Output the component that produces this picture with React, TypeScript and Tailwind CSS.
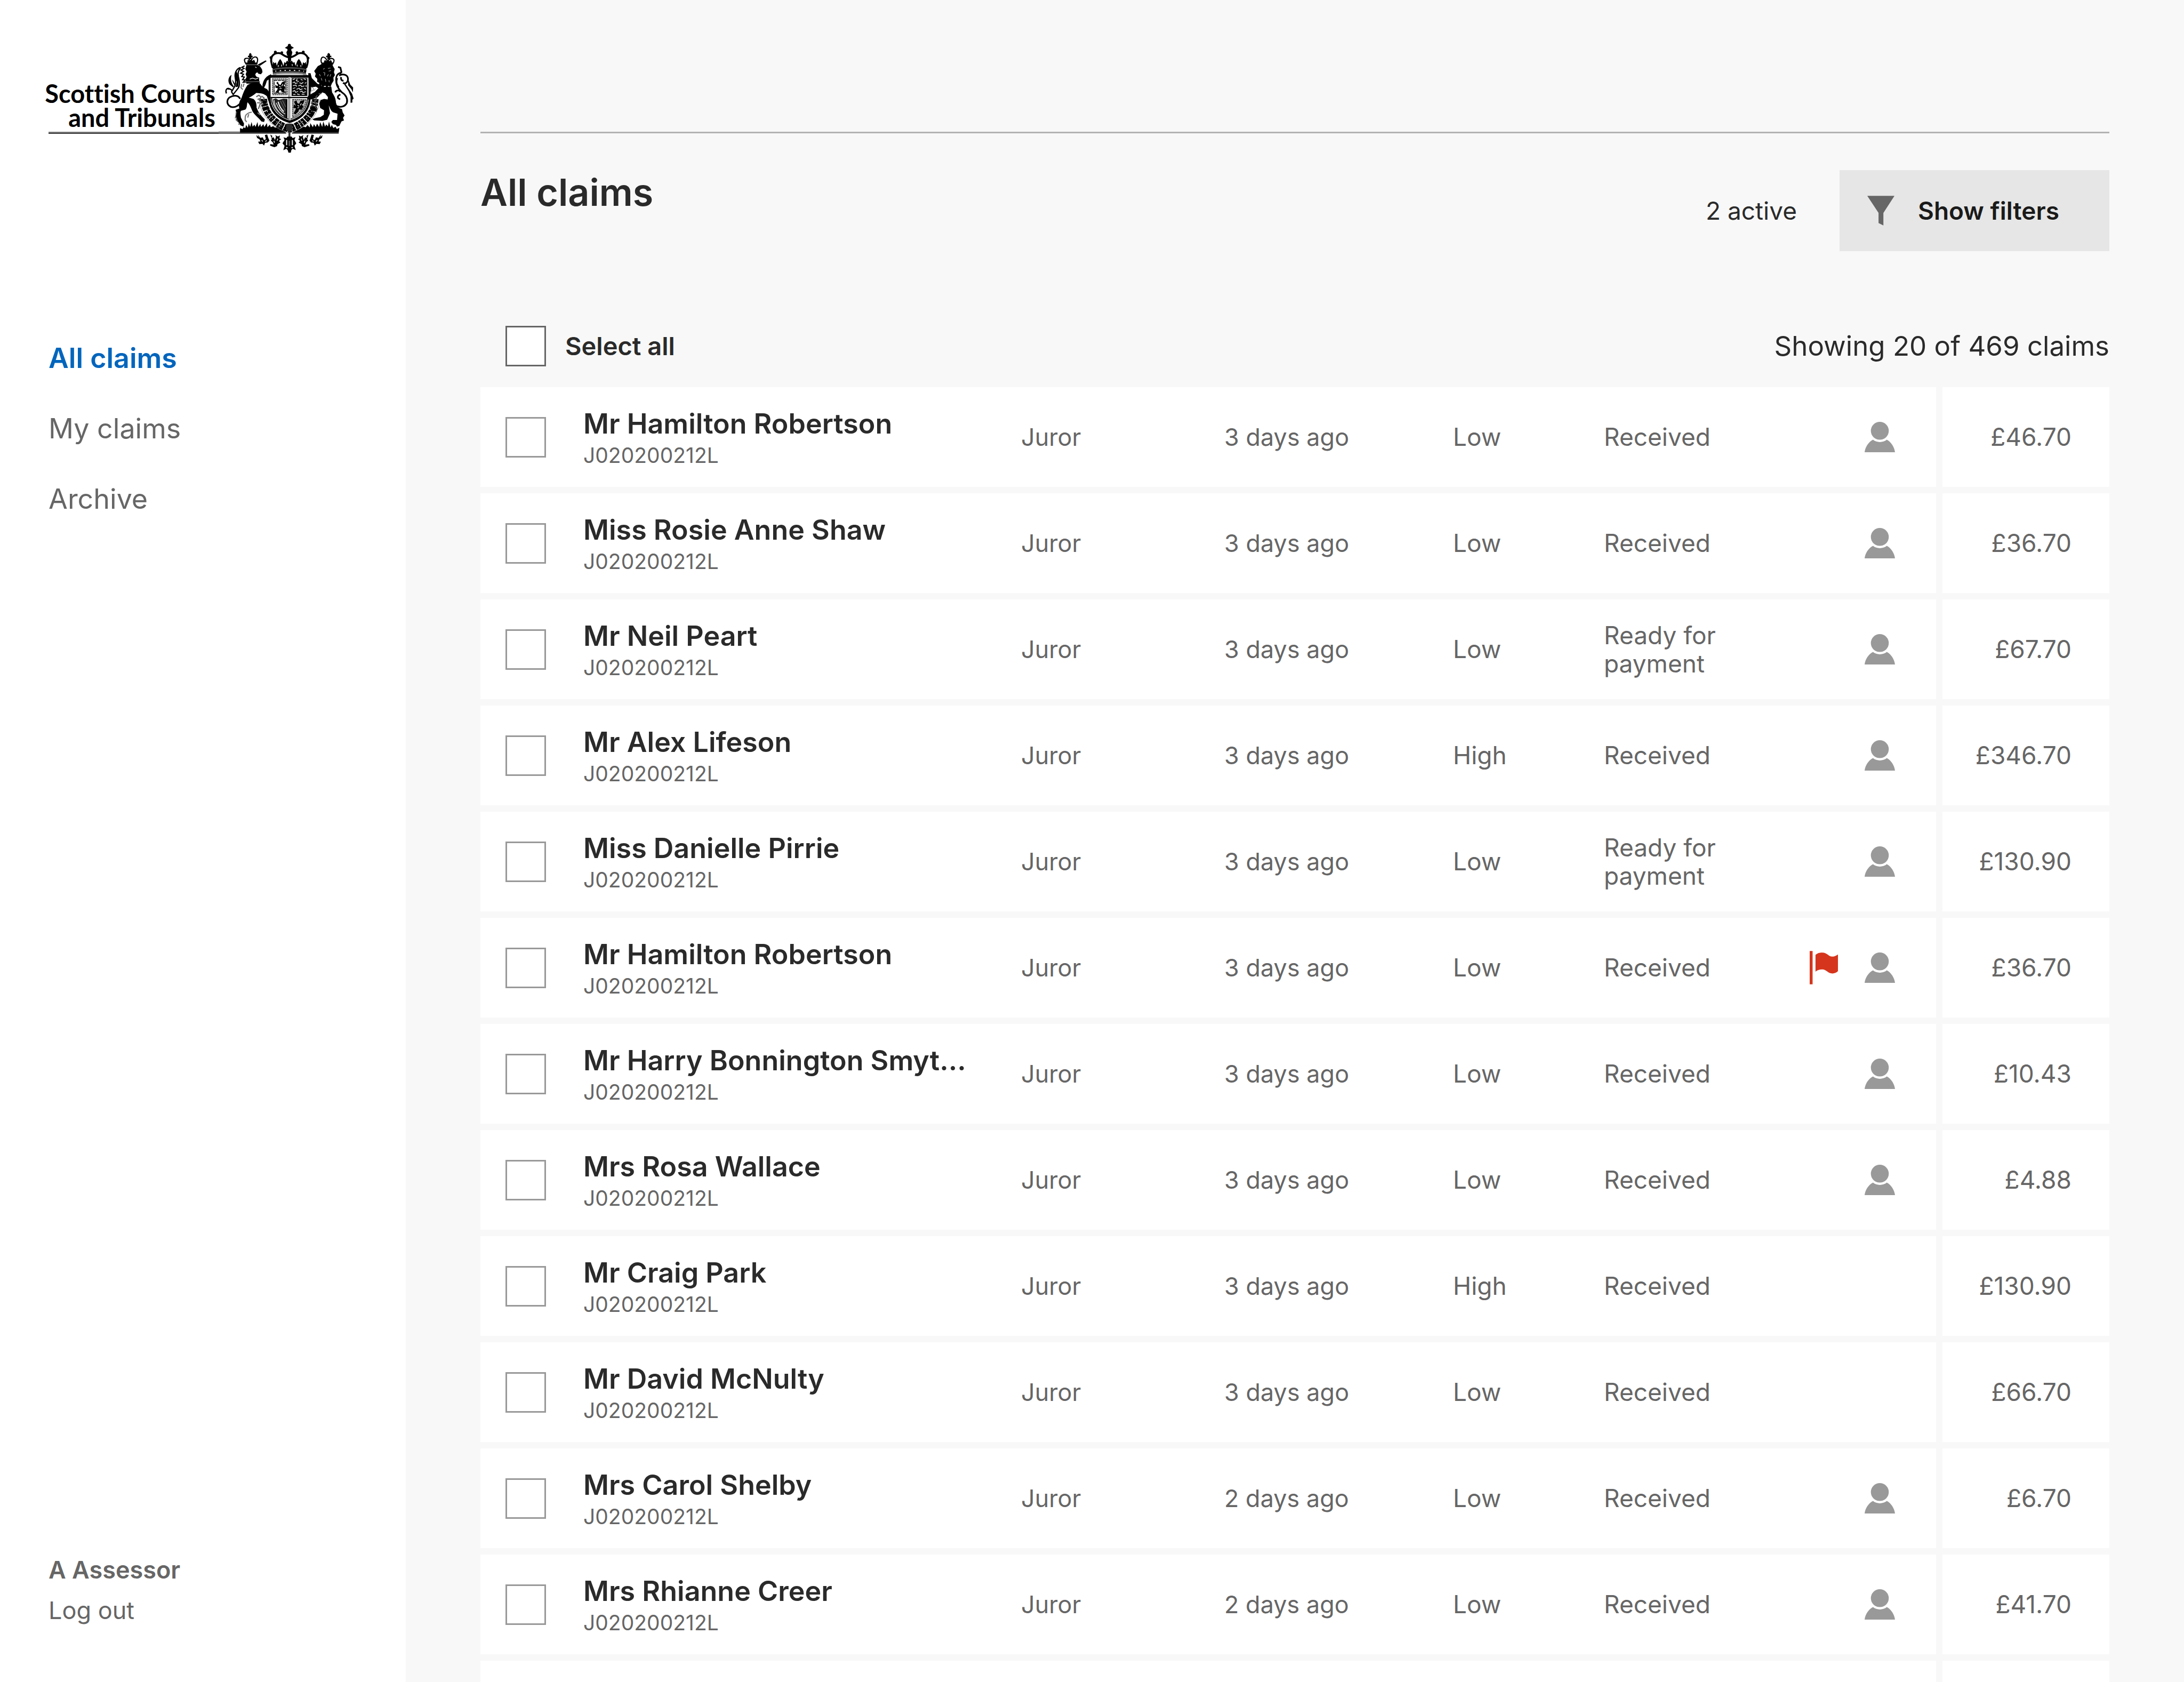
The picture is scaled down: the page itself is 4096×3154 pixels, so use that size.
import React from "react";

type Claim = {
  name: string;
  date: string;
  priority: string;
  status: string;
  amount: string;
  assigned?: boolean;
  flagged?: boolean;
};

const REFERENCE = "J020200212L";

const claims: Claim[] = [
  { name: "Mr Hamilton Robertson", date: "3 days ago", priority: "Low", status: "Received", amount: "£46.70", assigned: true },
  { name: "Miss Rosie Anne Shaw", date: "3 days ago", priority: "Low", status: "Received", amount: "£36.70", assigned: true },
  { name: "Mr Neil Peart", date: "3 days ago", priority: "Low", status: "Ready for payment", amount: "£67.70", assigned: true },
  { name: "Mr Alex Lifeson", date: "3 days ago", priority: "High", status: "Received", amount: "£346.70", assigned: true },
  { name: "Miss Danielle Pirrie", date: "3 days ago", priority: "Low", status: "Ready for payment", amount: "£130.90", assigned: true },
  { name: "Mr Hamilton Robertson", date: "3 days ago", priority: "Low", status: "Received", amount: "£36.70", assigned: true, flagged: true },
  { name: "Mr Harry Bonnington Smyt...", date: "3 days ago", priority: "Low", status: "Received", amount: "£10.43", assigned: true },
  { name: "Mrs Rosa Wallace", date: "3 days ago", priority: "Low", status: "Received", amount: "£4.88", assigned: true },
  { name: "Mr Craig Park", date: "3 days ago", priority: "High", status: "Received", amount: "£130.90" },
  { name: "Mr David McNulty", date: "3 days ago", priority: "Low", status: "Received", amount: "£66.70" },
  { name: "Mrs Carol Shelby", date: "2 days ago", priority: "Low", status: "Received", amount: "£6.70", assigned: true },
  { name: "Mrs Rhianne Creer", date: "2 days ago", priority: "Low", status: "Received", amount: "£41.70", assigned: true },
];

function Emblem() {
  return (
    <svg viewBox="0 0 1080 960" className="h-[234px] w-[263px] shrink-0" role="img" aria-label="Royal coat of arms">
      {/* rule and grassy mound */}
      <path d="M0 741H170V750H0Z" fill="#7f7f7f" />
      <path d="M0 750H520V758H0ZM565 750H925V758H565Z" fill="#404040" />
      <path d="M165 750V715L185 722L192 708L205 716L212 690L225 712L232 678L243 706L254 668L262 704L276 688L284 706L300 668L305 706L322 682L326 706L345 684L352 706L372 676L376 708L395 688L402 708L420 700L436 712L455 704L480 722L505 736L520 750Z" />
      <path d="M925 750L930 712L910 722L900 704L884 714L872 690L862 710L850 664L842 702L828 686L820 704L806 664L798 706L782 668L774 706L758 680L748 706L734 684L726 708L706 676L702 710L684 690L672 708L650 704L630 716L600 730L568 750Z" />
      {/* imperial crown */}
      <g>
        <ellipse cx="545" cy="79" rx="12" ry="13" />
        <path d="M510 97L530 84H560L580 97L560 106V118L568 130L562 158H528L522 130L530 118V106Z" />
        <path d="M534 150H558V200H534Z" />
        <path d="M545 168C520 172 500 152 482 142C460 132 432 138 416 156C396 178 406 214 418 252" fill="none" stroke="#000" strokeWidth="15" />
        <path d="M547 168C572 172 592 152 610 142C632 132 660 138 676 156C696 178 688 214 674 252" fill="none" stroke="#000" strokeWidth="15" />
        <g>
          <circle cx="437" cy="130" r="11" /><circle cx="487" cy="134" r="10" /><circle cx="402" cy="172" r="10" /><circle cx="405" cy="200" r="8" />
          <circle cx="603" cy="134" r="10" /><circle cx="652" cy="130" r="11" /><circle cx="690" cy="176" r="10" /><circle cx="686" cy="202" r="8" />
        </g>
        <path d="M420 204L432 216L442 208L448 236L456 212L462 200L474 182L486 200L492 214L500 236L506 206L516 214L526 196L538 204L545 176L554 204L564 196L574 212L584 206L592 236L600 214L606 198L618 182L630 198L638 214L644 236L650 208L662 216L672 204L676 268L600 252L545 248L490 252L416 268Z" />
        <path d="M458 244L462 230M484 240L486 226M520 236L522 222M568 236L566 222M606 240L604 226M634 244L632 230" stroke="#fff" strokeWidth="5" />
        <path d="M416 262C460 240 630 240 676 262L672 300C620 282 470 282 418 300Z" fill="#4a4a4a" />
        <path d="M418 280C470 262 620 262 674 280" fill="none" stroke="#000" strokeWidth="18" />
        <path d="M436 277C470 268 620 268 658 277" fill="none" stroke="#e8e8e8" strokeWidth="8" strokeDasharray="10 26" />
        <path d="M414 304C460 280 630 280 682 304L686 310H410Z" fill="#808080" />
        <path d="M444 300C500 292 590 292 650 300V310H444Z" fill="#c4c4c4" />
      </g>
      {/* garter belt */}
      <path d="M350 490C354 596 438 690 545 722C652 690 738 596 742 490" fill="none" stroke="#000" strokeWidth="56" strokeDasharray="34 5 18 4 26 6" />
      <path d="M312 494C320 620 420 720 545 752C670 720 772 620 780 494" fill="none" stroke="#8a8a8a" strokeWidth="4" />
      <path d="M350 500C354 600 438 680 545 716C652 680 738 600 742 500" fill="none" stroke="#fff" strokeWidth="6" strokeDasharray="7 15" />
      <path d="M336 520C350 610 436 700 540 732M756 520C742 610 656 700 552 732" fill="none" stroke="#fff" strokeWidth="4" strokeDasharray="5 19" />
      <path d="M376 488C382 590 450 656 545 684C640 656 712 590 718 488" fill="none" stroke="#fff" strokeWidth="7" />
      {/* shield */}
      <path d="M385 308H708V480C708 580 642 650 546 676C450 650 385 580 385 480Z" />
      <path d="M400 327H694V482C690 566 636 634 546 655C460 634 402 566 400 482Z" fill="#fff" />
      <path d="M408 482C410 560 462 626 546 648C632 626 684 560 686 482" fill="none" stroke="#000" strokeWidth="7" />
      <path d="M537 322H556V655H537Z" fill="#c4c4c4" />
      <path d="M537 322H545V655H537Z" fill="#808080" />
      <path d="M400 475H694V484H400Z" />
      <path d="M684 327H694V470H684Z" fill="#b5b5b5" />
      {/* first quarter, lion within a tressure */}
      <path d="M418 338H526V456H418Z" fill="none" stroke="#a8a8a8" strokeWidth="13" />
      <path d="M416 336H528V458H416Z" fill="none" stroke="#222" strokeWidth="6" strokeDasharray="7 9" />
      <path d="M428 348H516V446H428Z" fill="none" stroke="#333" strokeWidth="8" strokeDasharray="24 4" />
      <path d="M444 366L456 358L464 376L476 384L488 362L512 352L510 378L500 388L514 398L506 424L512 444L484 436L480 424L466 426L462 444L436 440L450 424L456 408L438 404L436 380L452 392L458 386Z" />
      <path d="M466 392L478 400M486 392L496 376M470 412L486 408M448 376L456 382" stroke="#fff" strokeWidth="5" />
      {/* second quarter, three lions passant */}
      <path d="M562 330H682V468H562Z" fill="#0c0c0c" />
      <path d="M570 342L588 336M606 334L598 350L618 356M632 338L646 346M656 334L672 342M570 366L584 360L592 372L608 366M622 366L640 372L652 362M664 370L676 364M572 388L596 384L600 396M614 390L632 384L640 396L660 390M674 384V398M572 410L590 404M600 416L620 408L628 420L646 412M658 408L674 416M570 432L586 426L594 440L612 432M626 436L642 430L650 442L672 434M574 456H592M604 452L624 458M640 454H662" fill="none" stroke="#fff" strokeWidth="5" />
      {/* third quarter, harp */}
      <path d="M418 494L440 486L462 498L500 488L530 490V644C474 622 428 572 418 494Z" fill="#222" />
      <path d="M428 500C430 552 456 592 500 624M444 520C458 560 480 590 512 606" fill="none" stroke="#fff" strokeWidth="5" />
      <path d="M458 512C466 542 484 572 502 588" fill="none" stroke="#fff" strokeWidth="8" />
      <path d="M476 506L512 580M492 502L516 552" fill="none" stroke="#6c6c6c" strokeWidth="5" />
      <path d="M522 498V636" stroke="#000" strokeWidth="7" />
      {/* fourth quarter, lion within a tressure */}
      <path d="M564 490H682C678 560 636 616 564 642Z" fill="#b5b5b5" />
      <path d="M572 496H674C668 556 630 604 572 630Z" fill="none" stroke="#333" strokeWidth="7" strokeDasharray="9 6" />
      <path d="M580 512L600 502L606 522L620 528L630 506L662 500L652 526L640 536L654 546L638 574L620 570L614 588L590 610L578 600L590 578L596 562L576 560L580 532L596 544Z" />
      <path d="M608 538L620 548M628 540L638 524M606 560L620 556" stroke="#fff" strokeWidth="5" />
      {/* unicorn */}
      <path d="M235 144L243 136L253 144V158H262V170H253V184H235V170H226V158H235Z" />
      <path d="M212 222C196 200 194 180 212 178C228 174 240 188 246 204C254 186 270 162 288 168C306 174 302 200 292 222Z" fill="none" stroke="#000" strokeWidth="9" />
      <path d="M210 210H298V226H210ZM222 196L230 188L238 198L250 186L260 198L272 188L280 200V214H222Z" />
      <path d="M300 226L362 194L370 200L318 236Z" />
      <path d="M214 230H300L318 238L334 262L338 284L326 300L306 296L300 286L288 290L282 304L292 320L312 326V346L318 372H214L206 340L216 320L208 300L216 280L206 262Z" />
      <path d="M282 244L292 250M240 338L262 330L284 338L306 330" stroke="#fff" fill="none" strokeWidth="5" />
      <path d="M200 236L180 246L196 256L172 268L192 278L170 292L192 300L178 318L198 322L184 342L204 344L190 362L210 360" fill="none" stroke="#000" strokeWidth="9" />
      <path d="M206 354C232 366 280 352 318 358M178 376L172 404L186 418M196 372L188 398" fill="none" stroke="#555" strokeWidth="7" />
      <path d="M222 384C250 362 290 366 320 372L338 396C336 366 352 336 372 318L402 300L412 312L396 334L372 350L362 380L350 404L372 414C388 430 398 456 402 500L410 556C392 540 382 500 372 470C352 448 318 446 290 444C268 462 250 474 232 480L268 490C286 502 294 530 292 556C304 590 326 620 356 648L350 668L330 664C308 636 276 612 262 588C250 560 240 530 222 516C216 540 220 560 206 572L172 582C164 596 170 616 172 634L196 680L192 704L168 694C156 672 134 650 134 620C128 600 140 596 130 574L160 564C152 540 158 508 176 484C188 446 204 410 222 384Z" />
      <path d="M256 592C228 596 212 606 206 624L204 652L216 668M232 608L224 634M300 596L320 614" fill="none" stroke="#777" strokeWidth="9" />
      <path d="M140 590L128 640M142 636L134 652L156 672M152 680L160 690" fill="none" stroke="#444" strokeWidth="6" />
      <path d="M290 474L310 462L326 476L316 500L334 512L318 534L306 568M300 494L318 488M330 468L350 482L346 500L370 510M296 520L318 520" fill="none" stroke="#666" strokeWidth="9" />
      <path d="M342 498L370 508L366 526L344 530ZM336 556L372 548L394 560L386 574L344 576Z" />
      <path d="M166 490C150 456 110 462 82 480C56 506 66 538 96 552C128 560 152 542 172 520" fill="none" stroke="#000" strokeWidth="13" />
      <path d="M60 448C50 424 62 406 78 410C94 414 108 424 100 436L112 456L150 408C164 392 160 350 152 318C146 290 150 272 168 252L162 250C138 262 122 290 128 324C134 352 134 380 118 404L104 428M70 412L92 416" fill="none" stroke="#000" strokeWidth="10" />
      <path d="M100 304C76 318 68 350 84 378L112 402L116 392C96 364 90 340 100 304ZM104 340C108 362 118 380 128 392L132 384C122 368 114 352 104 340ZM134 272C118 300 130 330 140 360L130 400L150 396C160 360 148 320 146 296Z" />
      {/* lion */}
      <path d="M838 144L846 136L858 144V158H868V170H858V186H838V170H828V158H838Z" />
      <path d="M800 222C780 200 790 168 806 168C822 170 834 190 840 206C850 180 870 172 884 184C896 194 886 210 878 222Z" fill="none" stroke="#000" strokeWidth="9" />
      <path d="M798 210H880V226H798ZM812 200L820 190L832 200L842 188L852 200L864 190L872 202V214H812Z" />
      <path d="M782 228L800 216L874 220L882 240L894 260L888 284L896 306L884 326L886 350L872 372L862 398L846 390L834 404L820 388L800 404L792 384L776 388L774 366L758 358L760 336L742 318L748 296L736 276L752 254L764 238Z" />
      <path d="M806 262L816 254M842 256L862 252M806 286L818 290L816 310M848 276L866 272M836 316L846 302M858 318L864 300M790 330L796 348M822 336L826 358M850 346L852 362M776 300L784 314" stroke="#999" fill="none" strokeWidth="5" />
      <path d="M690 292H708L718 330L762 374L786 380L800 398L868 396L874 440C890 466 902 484 904 520C910 544 922 562 950 568L956 594L970 618L958 636L966 656L946 664L930 698L912 704L904 690L880 684L868 668L880 652L912 652L916 604L890 596C866 592 858 560 848 540L858 600L836 650L800 660L772 658L736 656L722 646L744 638L784 630L810 612L812 578L782 560L776 524L786 498L812 490L840 494L842 476L820 448L800 440L786 450L762 478L722 492L690 496L688 468L716 450L742 436L768 408L750 396L720 400L706 440L698 420Z" />
      <path d="M712 398L730 406L728 424L712 432ZM746 410L734 426" fill="#fff" stroke="#777" strokeWidth="4" />
      <path d="M760 462L748 478L754 500L738 514L752 530L746 560L762 568M722 506L716 524L728 536L712 552M770 452L792 448" fill="none" stroke="#444" strokeWidth="9" />
      <path d="M704 548L736 552L758 570L752 590L708 580ZM700 600L736 606L726 624L696 620Z" />
      <path d="M920 244L938 250L946 284L934 296M962 350C944 350 940 336 944 322M928 310C950 296 990 300 996 330C1000 360 976 380 958 366M914 330C894 372 920 410 950 440C980 458 996 490 988 520C974 552 930 560 898 540M898 440C906 420 930 420 938 436M936 492C910 486 914 464 938 456" fill="none" stroke="#000" strokeWidth="13" />
      <path d="M936 290C906 300 900 330 908 370L924 400" fill="none" stroke="#000" strokeWidth="12" />
      <path d="M998 336L1014 380L1036 402L1034 440L1022 414L998 386ZM962 370L1000 430L1016 470L1016 520L1030 518V496L1040 488L1028 450L1002 412L978 376Z" />
      {/* thistle, rose and shamrock badge */}
      <path d="M290 768L308 784L302 764L320 790L340 786L350 808L364 800L356 768L374 764L382 790L392 812L378 826L358 828L350 850L338 836L314 838L304 820L322 818L316 802L296 790Z" />
      <path d="M398 764L414 776L408 790L424 786L434 806L442 782L436 768L456 780L472 772L468 794L482 800L464 814L476 826L454 838L450 854L430 862L396 850L398 838L424 842L416 822L402 812L410 800Z" />
      <path d="M800 768L784 784L788 764L770 790L750 786L740 808L726 800L734 768L716 764L708 790L700 812L712 826L732 828L740 850L754 836L778 838L788 820L770 818L776 802L796 790Z" />
      <path d="M692 764L676 776L682 790L666 786L656 806L648 782L654 768L634 780L618 772L622 794L612 800L628 814L616 826L638 838L642 854L662 862L700 850L696 838L668 842L676 822L690 812L682 800Z" />
      <path d="M332 808L340 818M370 810L360 818M426 812L430 828M456 796L450 812M760 808L750 818M722 810L730 818M664 812L660 828M636 796L642 812" stroke="#fff" strokeWidth="6" />
      <path d="M524 680H566V700L572 716L562 738H530L518 716Z" fill="#2a2a2a" />
      <path d="M538 742H553V786H538Z" fill="#333" />
      <path d="M500 786L522 792L530 780H562L570 792L592 784L584 806L598 832L584 852L594 884L570 874L560 884L556 904H538L532 884L522 874L498 886L508 852L492 832L508 806Z" />
      <path d="M524 806V846M568 806V846M522 862L530 868M570 862L562 868" stroke="#fff" strokeWidth="8" />
      <path d="M545 812V852" stroke="#555" strokeWidth="12" />
    </svg>
  );
}

function FilterIcon() {
  return (
    <svg viewBox="0 0 70 76" className="h-14 w-[51px]" aria-hidden="true">
      <path d="M0 0H70L41.5 44V76L29 70V44Z" fill="#666666" />
    </svg>
  );
}

function PersonIcon() {
  return (
    <svg viewBox="0 0 78 78" className="size-[57px]" role="img" aria-label="Assigned">
      <circle cx="39" cy="23" r="23" fill="#999999" />
      <path d="M0 78C2 64 10 52 21.600 46C31 54 47 54 57 46C68 52 76 64 78 78Z" fill="#999999" />
    </svg>
  );
}

function FlagIcon() {
  return (
    <svg viewBox="0 0 73 86" className="h-[63px] w-[53px]" role="img" aria-label="Flagged">
      <path d="M0 0H7.500V86H0Z" fill="#d5351c" />
      <path d="M15 10C20 5 26 4 32 4C46 4 48 14.500 59 14.500C64 14.500 69 12 73 9V52C69 56 64 58 59 58C46 58 44 47.500 32 47.500C26 47.500 20 49 15 53.500Z" fill="#d5351c" />
    </svg>
  );
}

const checkboxClass = "block size-[76px] appearance-none border-[3px] bg-white";

function Sidebar() {
  return (
    <aside className="flex w-[761px] shrink-0 flex-col bg-white pt-[66px] pb-24">
      <a href="#home" className="flex items-start pl-[91px] text-black">
        <span className="h-[185px] w-[319px] shrink-0 border-b-2 border-[#404040]">
          <span className="flex h-full items-end justify-end border-b-2 border-[#7f7f7f] pr-1.5 pb-1 font-['Lato']">
            <span className="text-right text-[47px] leading-[45px] font-bold whitespace-nowrap [font-variant-ligatures:none]">
              Scottish Courts
              <br />
              and Tribunals
            </span>
          </span>
        </span>
        <Emblem />
      </a>
      <nav className="mt-[341px] flex flex-col gap-[70px] px-[91px] text-[52px] leading-[62px] text-[#666666]">
        <a href="#all" aria-current="page" className="font-semibold text-[#0065bd]">
          All claims
        </a>
        <a href="#mine">My claims</a>
        <a href="#archive">Archive</a>
      </nav>
      <div className="mt-auto flex flex-col px-[91px] text-[45px] leading-[76px] text-[#666666]">
        <span className="font-semibold">A Assessor</span>
        <a href="#logout">Log out</a>
      </div>
    </aside>
  );
}

function ClaimRow({ claim, index }: { claim: Claim; index: number }) {
  const id = `claim-${index}`;
  return (
    <tr className="bg-white">
      <td className="h-[187px] pl-[47px]">
        <input id={id} type="checkbox" className={`${checkboxClass} border-[#999999]`} />
      </td>
      <td className="pt-1.5">
        <label htmlFor={id} className="block truncate text-[52px] leading-[62px] font-semibold text-[#2a2a2a]">
          {claim.name}
        </label>
        <span className="block text-[39px] leading-[56px]">{REFERENCE}</span>
      </td>
      <td className="text-[45px]">Juror</td>
      <td className="text-[45px]">{claim.date}</td>
      <td>{claim.priority}</td>
      <td>{claim.status}</td>
      <td className="pr-[77px]">
        <div className="flex items-center justify-end gap-[50px]">
          {claim.flagged && <FlagIcon />}
          {claim.assigned && <PersonIcon />}
        </div>
      </td>
      <td className="border-l-[12px] border-[#f8f8f8] pr-[71px] text-right">{claim.amount}</td>
    </tr>
  );
}

export default function App() {
  return (
    <div className="flex h-screen overflow-hidden bg-[#f8f8f8] font-['Inter',sans-serif] text-[#2a2a2a]">
      <Sidebar />
      <main className="min-w-0 flex-1 px-[140px] pt-[247px]">
        <header className="flex items-start justify-between border-t-[3px] border-[#b3b3b3] pt-[69px]">
          <h1 className="text-[70px] leading-[84px] font-semibold">All claims</h1>
          <div className="flex items-center gap-20 text-[46px]">
            <span>2 active</span>
            <button type="button" className="flex h-[152px] items-center gap-11 bg-[#e6e6e6] pr-[94px] pl-[52px] font-semibold text-[#1a1a1a]">
              <FilterIcon />
              Show filters
            </button>
          </div>
        </header>
        <div className="mt-[140px] flex h-[76px] items-center justify-between pl-[47px]">
          <div className="flex items-center gap-9">
            <input id="select-all" type="checkbox" className={`${checkboxClass} border-[#666666]`} />
            <label htmlFor="select-all" className="text-[47px] font-semibold">
              Select all
            </label>
          </div>
          <p className="text-[51px]">Showing 20 of 469 claims</p>
        </div>
        <table className="mt-[27px] w-full table-fixed border-separate border-spacing-x-0 border-spacing-y-3 text-left text-[46px] leading-[53px] text-[#666666]">
          <colgroup>
            <col className="w-[193px]" />
            <col />
            <col className="w-[381px]" />
            <col className="w-[429px]" />
            <col className="w-[283px]" />
            <col className="w-[290px]" />
            <col className="w-[333px]" />
            <col className="w-[325px]" />
          </colgroup>
          <tbody>
            {claims.map((claim, i) => (
              <ClaimRow key={i} claim={claim} index={i} />
            ))}
            <tr className="bg-white">
              <td colSpan={7} className="h-[187px]" />
              <td className="border-l-[12px] border-[#f8f8f8]" />
            </tr>
          </tbody>
        </table>
      </main>
    </div>
  );
}
